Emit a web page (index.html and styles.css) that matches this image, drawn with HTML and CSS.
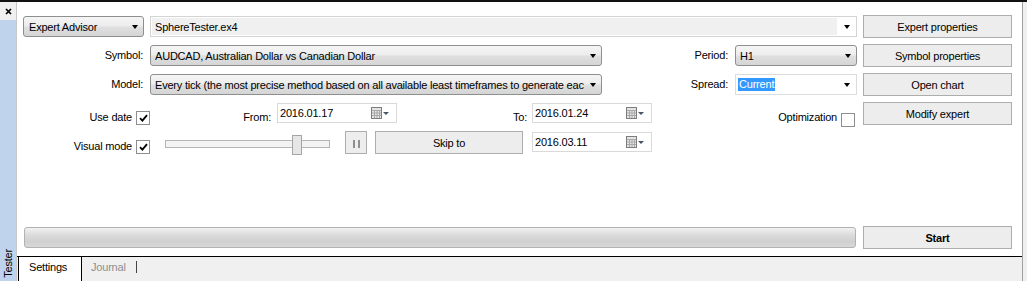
FILE: index.html
```html
<!DOCTYPE html>
<html lang="en">
<head>
    <meta charset="UTF-8">
    <meta name="viewport" content="width=device-width, initial-scale=1.0">
    <title>Tester</title>
    <link rel="stylesheet" href="styles.css">
</head>
<body>
<div class="window">
    <div class="sidebar">
        <span class="close">
            <svg width="7" height="7" viewBox="0 0 7 7"><path d="M1 1L6 6M6 1L1 6" stroke="#000" stroke-width="1.7"/></svg>
        </span>
        <div class="strip"><span class="title">Tester</span></div>
    </div>

    <div class="panel">
        <div class="form">
            <div class="row">
                <div class="select ea"><span>Expert Advisor</span><i class="arrow"></i></div>
                <div class="combo expert"><span>SphereTester.ex4</span><b class="drop"><i class="arrow"></i></b></div>
                <button class="btn">Expert properties</button>
            </div>

            <div class="row">
                <span class="lbl first">Symbol:</span>
                <div class="select wide"><span>AUDCAD, Australian Dollar vs Canadian Dollar</span><i class="arrow"></i></div>
                <span class="lbl mid">Period:</span>
                <div class="select short"><span>H1</span><i class="arrow"></i></div>
                <button class="btn">Symbol properties</button>
            </div>

            <div class="row">
                <span class="lbl first">Model:</span>
                <div class="select wide"><span>Every tick (the most precise method based on all available least timeframes to generate eac</span><i class="arrow"></i></div>
                <span class="lbl mid">Spread:</span>
                <div class="combo spread"><span class="picked">Current</span><b class="drop"><i class="arrow"></i></b></div>
                <button class="btn">Open chart</button>
            </div>

            <div class="row low">
                <span class="lbl check-lbl">Use date</span>
                <span class="check"><svg width="9" height="8" viewBox="0 0 9 8"><path d="M1 4.2L3.4 6.6L8 1.2" fill="none" stroke="#000" stroke-width="1.8"/></svg></span>
                <span class="lbl from">From:</span>
                <div class="date">
                    <span>2016.01.17</span>
                    <span class="cal"><svg width="19" height="12" viewBox="0 0 19 12"><rect x="0.5" y="0.5" width="10" height="11" fill="#e4e4e4" stroke="#7d7d7d"/><path d="M1 3.5H10M1 6H10M1 8.5H10M3.5 3V11M6 3V11M8.5 3V11" stroke="#a9a9a9" stroke-width="1"/><path d="M12 5H18L15 8Z" fill="#4a5564"/></svg></span>
                </div>
                <span class="lbl to">To:</span>
                <div class="date">
                    <span>2016.01.24</span>
                    <span class="cal"><svg width="19" height="12" viewBox="0 0 19 12"><rect x="0.5" y="0.5" width="10" height="11" fill="#e4e4e4" stroke="#7d7d7d"/><path d="M1 3.5H10M1 6H10M1 8.5H10M3.5 3V11M6 3V11M8.5 3V11" stroke="#a9a9a9" stroke-width="1"/><path d="M12 5H18L15 8Z" fill="#4a5564"/></svg></span>
                </div>
                <span class="lbl opt">Optimization</span>
                <span class="check opt-check"></span>
                <button class="btn modify">Modify expert</button>
            </div>

            <div class="row low">
                <span class="lbl check-lbl">Visual mode</span>
                <span class="check"><svg width="9" height="8" viewBox="0 0 9 8"><path d="M1 4.2L3.4 6.6L8 1.2" fill="none" stroke="#000" stroke-width="1.8"/></svg></span>
                <div class="slider">
                    <div class="track"></div>
                    <div class="thumb" style="left: 127px"></div>
                </div>
                <button class="btn pause"><i class="bar"></i><i class="bar"></i></button>
                <button class="btn skip">Skip to</button>
                <div class="date skip-date">
                    <span>2016.03.11</span>
                    <span class="cal"><svg width="19" height="12" viewBox="0 0 19 12"><rect x="0.5" y="0.5" width="10" height="11" fill="#e4e4e4" stroke="#7d7d7d"/><path d="M1 3.5H10M1 6H10M1 8.5H10M3.5 3V11M6 3V11M8.5 3V11" stroke="#a9a9a9" stroke-width="1"/><path d="M12 5H18L15 8Z" fill="#4a5564"/></svg></span>
                </div>
            </div>
        </div>

        <div class="run">
            <div class="progress"></div>
            <button class="btn start">Start</button>
        </div>

        <div class="tabs">
            <span class="tab active">Settings</span>
            <span class="tab">Journal</span>
            <i class="sep"></i>
        </div>
    </div>

    <div class="edge"></div>
</div>
</body>
</html>
```

FILE: styles.css
```css
body {
    margin: 0;
    font-family: "Liberation Sans", Arial, sans-serif;
    font-size: 11px;
    letter-spacing: -0.2px;
    color: #000;
    background: #f0f0f0;
}
.window {
    display: flex;
    width: 1027px;
    height: 281px;
    box-sizing: border-box;
    border-top: 2px solid #111;
}
.sidebar {
    width: 16px;
    display: flex;
    flex-direction: column;
    background: #f0f0f0;
}
.close {
    height: 18px;
    display: flex;
    align-items: center;
    justify-content: center;
}
.strip {
    flex: 1;
    background: #bfd4ec;
    display: flex;
    flex-direction: column;
    justify-content: flex-end;
    align-items: center;
    padding-bottom: 3px;
}
.title {
    writing-mode: vertical-rl;
    transform: rotate(180deg);
    line-height: 13px;
}
.panel {
    width: 1007px;
    box-sizing: border-box;
    background: #fff;
    border-left: 1px solid #c8c8c8;
    border-right: 1px solid #a0a0a0;
    display: flex;
    flex-direction: column;
}
.edge {
    width: 4px;
    background: #f0f0f0;
}
.form {
    padding: 13px 0 0 6px;
    display: flex;
    flex-direction: column;
    gap: 6px;
}
.row {
    display: flex;
    align-items: center;
    height: 23px;
}
.row.low {
    align-items: flex-start;
}
.select {
    box-sizing: border-box;
    height: 21px;
    border: 1px solid #8e8f8f;
    border-radius: 3px;
    background: linear-gradient(#f5f5f5, #ededed 45%, #dfdfdf 55%, #d5d5d5);
    display: flex;
    align-items: center;
    padding: 0 5px 0 4px;
    flex: none;
}
.select span {
    flex: 1;
    white-space: nowrap;
}
.select.ea {
    width: 121px;
    padding-left: 5px;
}
.select.wide {
    width: 452px;
    margin-left: 6px;
}
.select.short {
    width: 122px;
    margin-left: 6px;
}
.arrow {
    flex: none;
    width: 0;
    height: 0;
    margin-left: 6px;
    border-top: 4px solid #000;
    border-left: 3.5px solid transparent;
    border-right: 3.5px solid transparent;
}
.combo {
    box-sizing: border-box;
    height: 21px;
    display: flex;
    align-items: center;
    flex: none;
}
.combo.expert {
    width: 707px;
    margin-left: 6px;
    border: 1px solid #d4d4d4;
    box-shadow: inset 0 0 0 1px #fff;
    background: #f0f0f0;
    padding-left: 4px;
}
.combo.spread {
    width: 122px;
    margin-left: 6px;
    border: 1px solid #dcdcdc;
    background: #fff;
    padding-left: 2px;
}
.drop {
    margin-left: auto;
    width: 19px;
    height: 100%;
    background: #fff;
    display: flex;
    align-items: center;
    justify-content: center;
}
.drop .arrow {
    margin-left: 0;
}
.picked {
    background: #3399ff;
    color: #fff;
    line-height: 13px;
    padding: 0 1px;
}
.btn {
    box-sizing: border-box;
    width: 149px;
    height: 23px;
    margin-left: 6px;
    padding: 0;
    border: 1px solid #adadad;
    background: #ededed;
    font: inherit;
    letter-spacing: inherit;
    color: #000;
    flex: none;
}
.btn.modify {
    margin-left: 8px;
}
.btn.start {
    margin-left: 7px;
    font-weight: bold;
}
.lbl {
    flex: none;
    box-sizing: border-box;
    text-align: right;
    white-space: nowrap;
    line-height: 13px;
}
.lbl.first {
    width: 121px;
    padding-right: 1px;
}
.lbl.mid {
    width: 127px;
    padding-right: 1px;
}
.row.low .lbl {
    margin-top: 9px;
}
.lbl.check-lbl {
    width: 109px;
}
.lbl.from {
    width: 121px;
}
.lbl.to {
    width: 130px;
}
.lbl.opt {
    width: 185px;
}
.check {
    box-sizing: border-box;
    width: 14px;
    height: 14px;
    margin: 9px 0 0 4px;
    border: 1px solid #8e8e8e;
    background: #fff;
    display: flex;
    align-items: center;
    justify-content: center;
    flex: none;
}
.check.opt-check {
    margin-top: 11px;
}
.date {
    box-sizing: border-box;
    width: 120px;
    height: 20px;
    margin: 1px 0 0 6px;
    border: 1px solid #d9d9d9;
    background: #fff;
    display: flex;
    align-items: center;
    padding: 0 6px 0 2px;
    flex: none;
}
.lbl.to + .date {
    margin-left: 5px;
}
.date.skip-date {
    margin-left: 9px;
}
.cal {
    margin-left: auto;
    display: flex;
}
.slider {
    position: relative;
    width: 165px;
    height: 23px;
    margin-left: 15px;
    flex: none;
}
.track {
    box-sizing: border-box;
    height: 8px;
    margin-top: 9px;
    border: 1px solid #b5b5b5;
    background: #f3f3f3;
}
.thumb {
    position: absolute;
    top: 4px;
    box-sizing: border-box;
    width: 10px;
    height: 20px;
    border: 1px solid #a5a5a5;
    background: #e6e6e6;
}
.btn.pause {
    width: 22px;
    margin-left: 15px;
    display: flex;
    align-items: center;
    justify-content: center;
    gap: 3px;
    padding-top: 3px;
}
.bar {
    width: 2px;
    height: 8px;
    background: #8f8f8f;
}
.btn.skip {
    width: 148px;
    margin-left: 8px;
}
.run {
    display: flex;
    align-items: center;
    height: 23px;
    margin: auto 0 7px 0;
}
.progress {
    box-sizing: border-box;
    width: 832px;
    height: 21px;
    margin-left: 7px;
    border: 1px solid #b2b2b2;
    border-radius: 3px;
    background: linear-gradient(#f2f2f2, #dcdcdc 35%, #d0d0d0 70%, #d8d8d8);
}
.tabs {
    box-sizing: border-box;
    height: 25px;
    border-top: 1px solid #000;
    background: #f0f0f0;
    display: flex;
    align-items: flex-start;
}
.tab {
    padding: 4px 0 0 9px;
    line-height: 13px;
    color: #8e8e8e;
}
.tab.active {
    box-sizing: border-box;
    width: 64px;
    height: 24px;
    margin-left: 1px;
    padding-left: 10px;
    background: #fff;
    border-left: 1px solid #000;
    border-right: 1px solid #000;
    color: #000;
}
.sep {
    width: 1px;
    height: 12px;
    margin: 4px 0 0 10px;
    background: #444;
}
```
